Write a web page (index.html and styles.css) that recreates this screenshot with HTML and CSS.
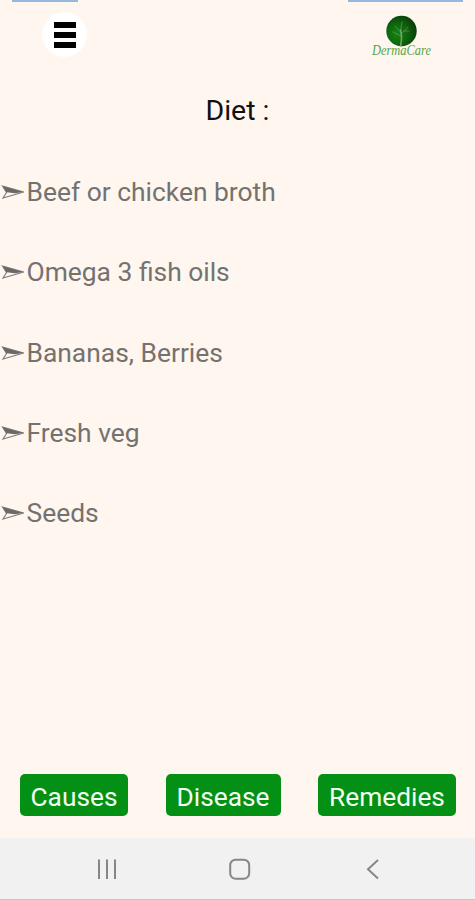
FILE: index.html
```html
<!DOCTYPE html>
<html lang="en">
<head>
  <meta charset="UTF-8">
  <meta name="viewport" content="width=device-width, initial-scale=1.0">
  <title>DermaCare - Diet</title>
  <link rel="stylesheet" href="styles.css">
</head>
<body>
  <!-- List arrow, used by every diet item -->
  <svg class="symbols" width="0" height="0">
    <symbol id="arrow" viewBox="0 0 24 16">
      <path d="M2.500 2 L23.500 8 L3 14 L6.500 8.500 Z" fill="none" stroke="#83817f" stroke-width="1.200"/>
      <path d="M2.500 2 L23.500 8 L15 9.200 L6.500 8.300 Z" fill="#6b6967"/>
    </symbol>
  </svg>

  <div class="screen">
    <!-- Blue edges at the top of the screen -->
    <div class="top-strip">
      <div class="strip-left"></div>
      <div class="strip-right"></div>
    </div>

    <header class="header">
      <button class="menu-btn" aria-label="Menu">
        <span></span>
        <span></span>
        <span></span>
      </button>
      <svg class="logo" width="72" height="56" viewBox="0 0 72 56">
        <defs>
          <radialGradient id="leaf" cx="0.35" cy="0.6" r="0.75">
            <stop offset="0" stop-color="#138512"/>
            <stop offset="0.5" stop-color="#0f610e"/>
            <stop offset="1" stop-color="#073507"/>
          </radialGradient>
        </defs>
        <circle cx="36.500" cy="19" r="15.200" fill="url(#leaf)"/>
        <g fill="none" stroke="#6fa765" stroke-linecap="round">
          <path d="M35.500 34 Q37.500 26 35.500 18" stroke-width="1.600"/>
          <path d="M35.500 20 L30 14 M35.500 19 L37 10 M36 22 L43 15 M36 24 L28 20 M39 19 L44 19" stroke-width="0.800" opacity="0.700"/>
        </g>
        <text class="logo-text" x="7" y="42.500" textLength="59" lengthAdjust="spacingAndGlyphs">DermaCare</text>
      </svg>
    </header>

    <h1 class="title">Diet :</h1>

    <ul class="diet-list">
      <li><svg class="arrow"><use href="#arrow"/></svg>Beef or chicken broth</li>
      <li><svg class="arrow"><use href="#arrow"/></svg>Omega 3 fish oils</li>
      <li><svg class="arrow"><use href="#arrow"/></svg>Bananas, Berries</li>
      <li><svg class="arrow"><use href="#arrow"/></svg>Fresh veg</li>
      <li><svg class="arrow"><use href="#arrow"/></svg>Seeds</li>
    </ul>

    <div class="buttons">
      <button class="btn causes">Causes</button>
      <button class="btn disease">Disease</button>
      <button class="btn remedies">Remedies</button>
    </div>

    <!-- Phone navigation bar -->
    <nav class="nav-bar">
      <svg width="24" height="24" viewBox="0 0 24 24">
        <path d="M4 2.500 V22 M12 2.500 V22 M20 2.500 V22"/>
      </svg>
      <svg width="24" height="24" viewBox="0 0 24 24">
        <rect x="2.200" y="2.700" width="19" height="19" rx="5.500"/>
      </svg>
      <svg width="24" height="24" viewBox="0 0 24 24">
        <path d="M17 3 L7 12.200 L17 21.500"/>
      </svg>
    </nav>
  </div>
</body>
</html>
```

FILE: styles.css
```css
* {
  box-sizing: border-box;
}

body {
  margin: 0;
  background-color: #fff6ef;
  font-family: Roboto, "Liberation Sans", sans-serif;
}

.symbols {
  display: none;
}

.screen {
  display: flex;
  flex-direction: column;
  width: 475px;
  height: 900px;
  overflow: hidden;
}

.top-strip {
  display: flex;
  justify-content: space-between;
  height: 2px;
  padding: 0 12px;
}

.strip-left, .strip-right {
  background-color: #94b8df;
}

.strip-left {
  width: 66px;
}

.strip-right {
  width: 115px;
}

.header {
  display: flex;
  justify-content: space-between;
  height: 72px;
  padding: 10px 38px 0 42px;
}

.menu-btn {
  display: flex;
  flex-direction: column;
  align-items: center;
  justify-content: center;
  gap: 4px;
  width: 45px;
  height: 45px;
  padding: 0;
  border: none;
  border-radius: 50%;
  background-color: #fff;
  cursor: pointer;
}

.menu-btn span {
  width: 22px;
  height: 6px;
  background-color: #000;
}

.logo {
  overflow: visible;
}

.logo-text {
  fill: #59a447;
  font-family: "Liberation Serif", serif;
  font-size: 14px;
  font-style: italic;
}

.title {
  height: 73px;
  margin: 0;
  padding-top: 20px;
  color: #111;
  font-size: 28.5px;
  font-weight: 400;
  line-height: 33px;
  text-align: center;
}

.diet-list {
  flex: 1;
  margin: 0;
  padding: 0;
  list-style: none;
}

.diet-list li {
  display: flex;
  align-items: center;
  height: 30px;
  margin: 30px 0 50.3px;
  color: #747270;
  font-size: 26.4px;
  line-height: 30px;
}

.diet-list .arrow {
  width: 24px;
  height: 16px;
  margin-right: 2.5px;
}

.buttons {
  display: flex;
  justify-content: space-between;
  height: 64px;
  padding: 0 19px 0 20px;
}

.btn {
  height: 42px;
  padding: 3px 0 0;
  border: none;
  border-radius: 5px;
  background-color: #049014;
  color: #f2fff0;
  font-family: inherit;
  font-size: 26.3px;
  cursor: pointer;
}

.causes {
  width: 108px;
}

.disease {
  width: 115px;
}

.remedies {
  width: 138px;
}

.nav-bar {
  display: flex;
  align-items: center;
  justify-content: space-between;
  height: 62px;
  padding: 0 90px 0 95px;
  border-bottom: 1px solid #c6c6c6;
  background-color: #f1f1f1;
}

.nav-bar svg {
  fill: none;
  stroke: #868686;
  stroke-width: 2;
}
```
